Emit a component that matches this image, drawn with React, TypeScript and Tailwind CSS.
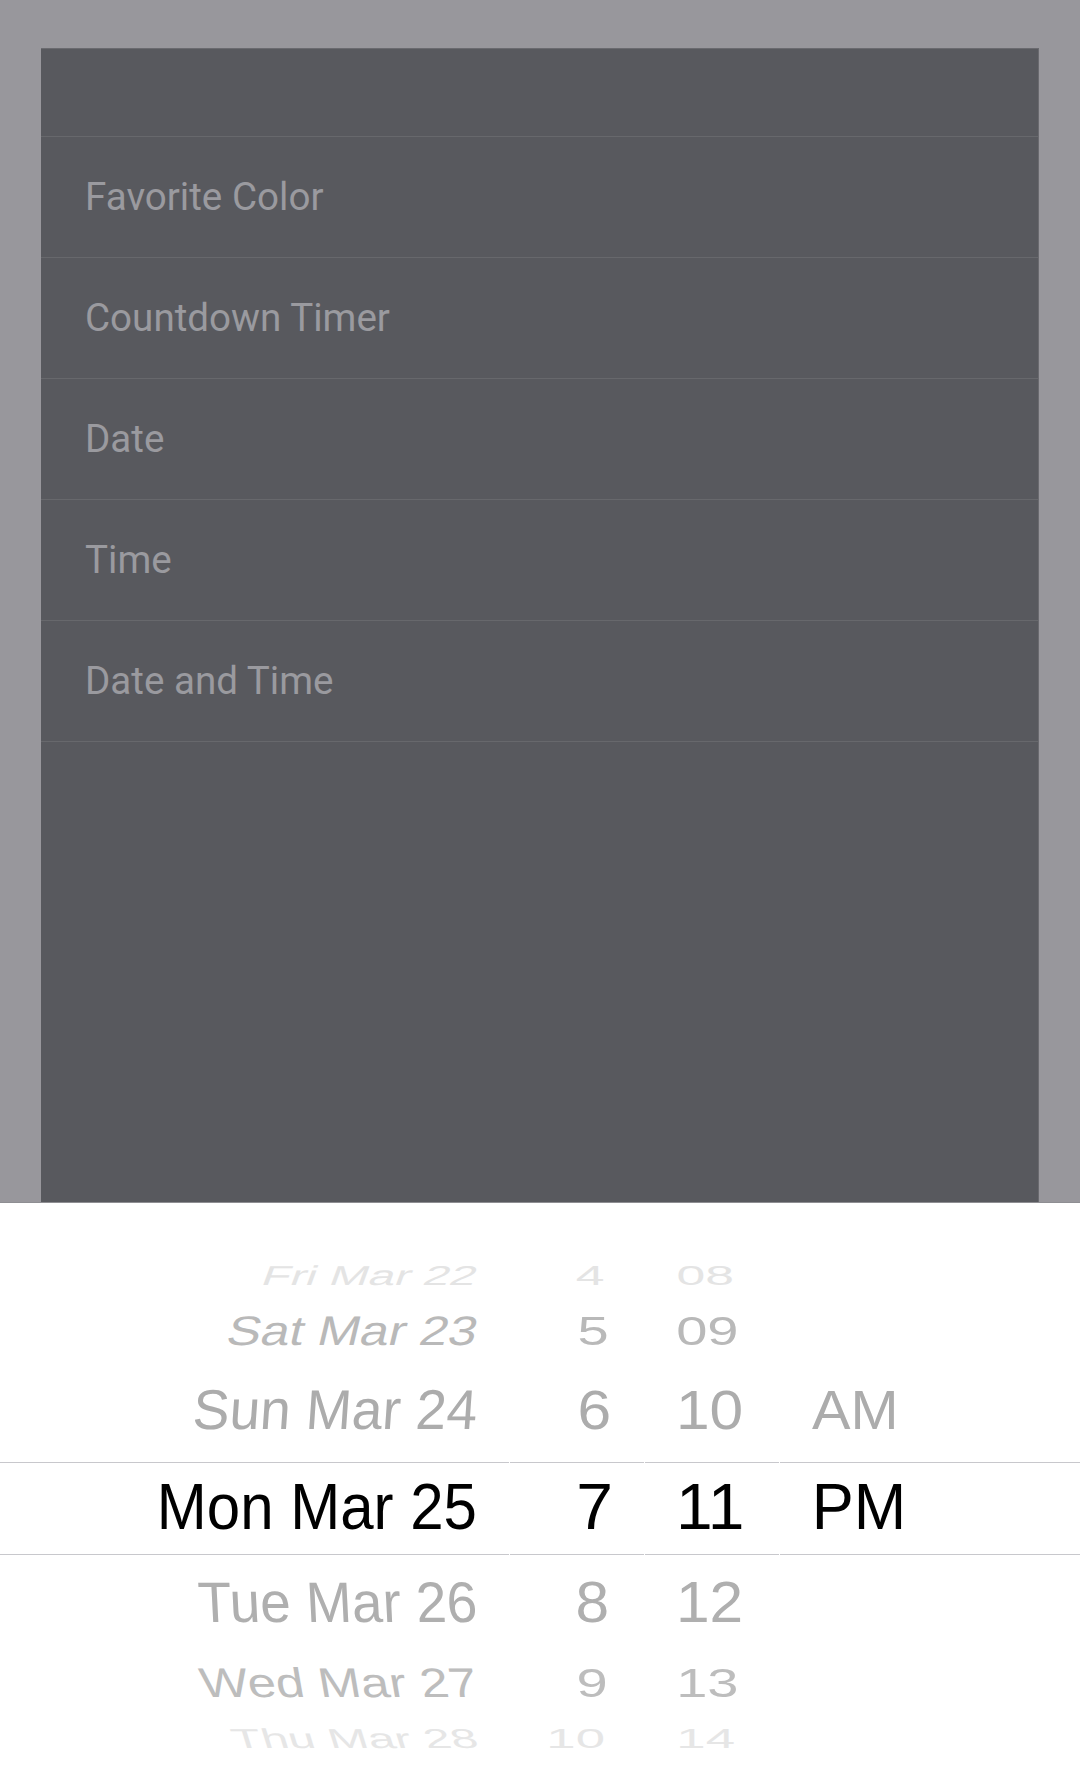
const menu = ['Favorite Color', 'Countdown Timer', 'Date', 'Time', 'Date and Time'];

type Field = 'date' | 'hour' | 'min' | 'ampm';

type Row = {
  h: string;
  look: string;
  skew: string;
  hp: string;
  sel?: boolean;
  date: string;
  hour: string;
  min: string;
  ampm: string;
};

// wheel rows, squashed toward the top and bottom edge
const rows: Row[] = [
  { h: 'h-[54px]', look: 'text-[47px] text-[#e4e4e4] scale-y-[0.58]', skew: '-skew-x-[12deg]', hp: 'pr-[41px]', date: 'Fri Mar 22', hour: '4', min: '08', ampm: '' },
  { h: 'h-[56px]', look: 'text-[51px] text-[#b9b9b9] scale-y-[0.81]', skew: '-skew-x-[11deg]', hp: 'pr-[37px]', date: 'Sat Mar 23', hour: '5', min: '09', ampm: '' },
  { h: 'h-[104px]', look: 'text-[55px] text-[#acacac] scale-y-[1.02]', skew: '-skew-x-[4deg]', hp: 'pr-[34px]', date: 'Sun Mar 24', hour: '6', min: '10', ampm: 'AM' },
  { h: 'h-[93px] pb-[4px]', look: 'text-[60px] text-black scale-y-[1.09]', skew: '', hp: 'pr-[33px]', sel: true, date: 'Mon Mar 25', hour: '7', min: '11', ampm: 'PM' },
  { h: 'h-[95px]', look: 'text-[55px] text-[#afafaf] scale-y-[1.04]', skew: 'skew-x-[3deg]', hp: 'pr-[36px]', date: 'Tue Mar 26', hour: '8', min: '12', ampm: '' },
  { h: 'h-[64px]', look: 'text-[51px] text-[#bdbdbd] scale-y-[0.81]', skew: 'skew-x-[8deg]', hp: 'pr-[38px]', date: 'Wed Mar 27', hour: '9', min: '13', ampm: '' },
  { h: 'h-[50px]', look: 'text-[48px] text-[#e6e6e6] scale-y-[0.57]', skew: 'skew-x-[10deg]', hp: 'pr-[42px]', date: 'Thu Mar 28', hour: '10', min: '14', ampm: '' },
];

function Column({ width, pad, field, extra }: { width: string; pad: string; field: Field; extra: string }) {
  return (
    <div className={`${width} flex flex-col pt-[45px]`}>
      {rows.map((r, i) => (
        <div
          key={i}
          className={`${r.h} flex items-center ${pad} ${field === 'hour' ? r.hp : ''} ${r.sel ? 'border-y border-[#c8c8cc]' : ''}`}
        >
          <span className={`inline-block leading-none whitespace-nowrap ${r.look} ${field === 'date' ? r.skew : ''} ${extra}`}>
            {r[field]}
          </span>
        </div>
      ))}
    </div>
  );
}

const Picker = () => (
  <div className="h-[584px] shrink-0 bg-white border-t border-[#8e8e92] flex gap-px font-['Liberation_Sans',Arial,sans-serif] overflow-hidden">
    <Column width="w-[509px]" pad="justify-end pr-[32px]" field="date" extra="" />
    <Column width="w-[134px]" pad="justify-end" field="hour" extra="scale-x-[1.1]" />
    <Column width="w-[134px]" pad="justify-start pl-[34px]" field="min" extra="scale-x-[1.1]" />
    <Column width="flex-1" pad="justify-start pl-[34px]" field="ampm" extra="scale-x-[1.05]" />
  </div>
);

export default function App() {
  return (
    <div className="w-[1080px] h-[1786px] bg-[#98979c] flex flex-col overflow-hidden">
      <div className="flex-1 px-[41px] pt-[48px]">
        <div className="h-full bg-[#58595e] border-t border-r border-[#6a6a6f]">
          <div className="h-[88px] border-b border-[#67686c]" />
          {menu.map((m) => (
            <div
              key={m}
              className="h-[121px] border-b border-[#67686c] flex items-center pl-[44px] font-['Roboto',sans-serif] text-[38.6px] text-[#9a9a9f]"
            >
              {m}
            </div>
          ))}
        </div>
      </div>
      <Picker />
    </div>
  );
}
